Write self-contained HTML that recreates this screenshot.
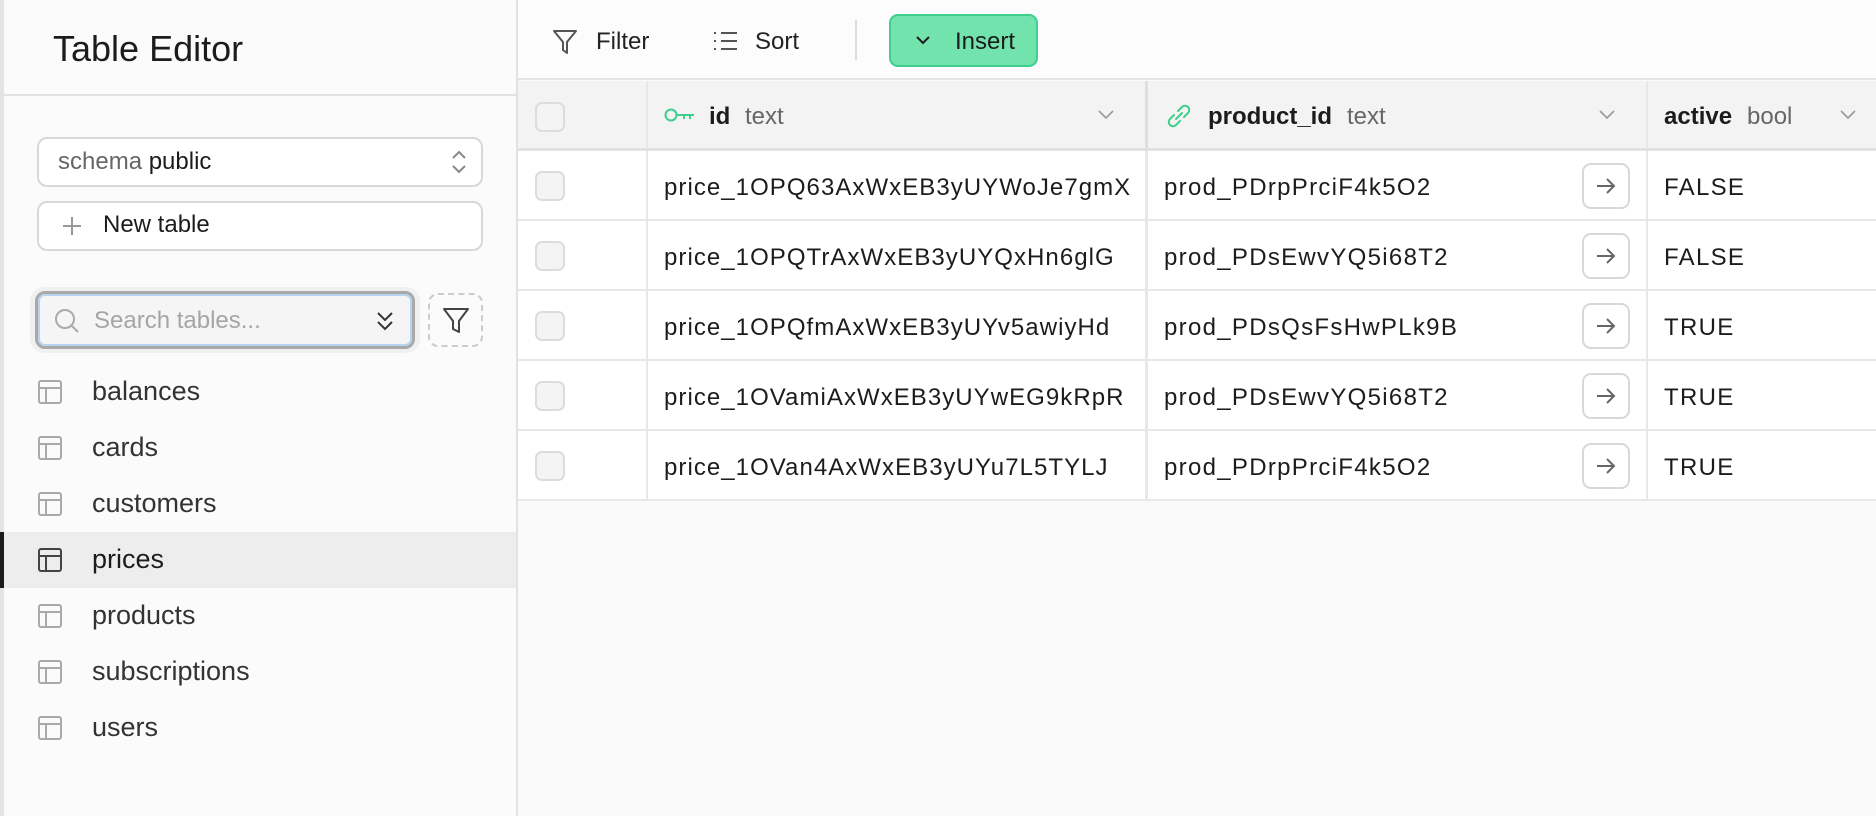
<!DOCTYPE html>
<html><head><meta charset="utf-8"><style>
*{box-sizing:border-box;margin:0;padding:0}
body{width:1876px;height:816px;overflow:hidden;font-family:"Liberation Sans",sans-serif;background:#fafafa;position:relative;color:#1c1c1c}
.abs{position:absolute}
#side{left:0;top:0;width:518px;height:816px;background:#fbfbfb;border-left:4px solid #e4e4e4;border-right:2px solid #e2e2e2}
.title{left:49px;top:28px;font-size:36px;color:#1c1c1c}
.hline{left:0;top:94px;width:514px;height:2px;background:#e2e2e2}
.box{border:2px solid #d8d8d8;border-radius:10px;background:#fff}
.item{left:0;width:514px;height:56px;font-size:27px;color:#333}
.item span{position:absolute;left:92px;top:12px}
.item svg{position:absolute;left:38px;top:16px}
.tb{font-size:24px;color:#222}
.row{position:absolute;left:518px;width:1358px;height:70px;background:#fff;border-bottom:2px solid #e8e8e8}
.cb{position:absolute;left:17px;top:20px;width:30px;height:30px;border:2px solid #dcdcdc;border-radius:7px;background:#f4f4f4}
.cell{position:absolute;top:23px;font-size:24px;letter-spacing:1.3px;color:#1c1c1c}
.idc{letter-spacing:1.05px}
.vl{position:absolute;top:0;width:2px;height:100%;background:#e8e8e8}
.arr{position:absolute;left:1064px;top:12px;width:48px;height:46px;border:2px solid #d8d8d8;border-radius:9px;background:#fff}
</style></head><body>
<div id="side" class="abs">
 <div class="abs title">Table Editor</div>
 <div class="abs hline"></div>
</div>
<div class="abs box" style="left:37px;top:137px;width:446px;height:50px"></div>
<div class="abs" style="left:58px;top:148px;font-size:24px;color:#666">schema <span style="color:#1c1c1c">public</span></div>
<svg class="abs" style="left:450px;top:148px" width="18" height="28" viewBox="0 0 18 28"><path d="M3 10 L9 4 L15 10 M3 18 L9 24 L15 18" fill="none" stroke="#888" stroke-width="2"/></svg>
<div class="abs box" style="left:37px;top:201px;width:446px;height:50px"></div>
<svg class="abs" style="left:62px;top:216px" width="20" height="20"><path d="M10 1V19M1 10H19" stroke="#999" stroke-width="2"/></svg>
<div class="abs" style="left:103px;top:211px;font-size:24px;color:#1c1c1c">New table</div>
<div class="abs" style="left:30px;top:287px;width:390px;height:66px;border-radius:14px;background:#f0f0f0"></div>
<div class="abs" style="left:35px;top:291px;width:380px;height:58px;border:3px solid #a9a9a9;border-radius:10px;background:#f5f5f5;box-shadow:inset 0 0 0 2px #b7d4f0"></div>
<svg class="abs" style="left:54px;top:308px" width="26" height="26"><circle cx="11" cy="11" r="9" fill="none" stroke="#aaa" stroke-width="2"/><path d="M17.5 17.5L24 24" stroke="#aaa" stroke-width="2"/></svg>
<div class="abs" style="left:94px;top:307px;font-size:24px;color:#a5a5a5">Search tables...</div>
<svg class="abs" style="left:376px;top:309px" width="18" height="24"><path d="M2 4L9 11L16 4M2 13L9 20L16 13" fill="none" stroke="#333" stroke-width="2"/></svg>
<div class="abs" style="left:428px;top:293px;width:55px;height:54px;border:2px dashed #ccc;border-radius:10px"></div>
<svg class="abs" style="left:441px;top:305px" width="30" height="30"><path d="M3 4H27L18 16V27L12 24V16Z" fill="none" stroke="#444" stroke-width="2" stroke-linejoin="round"/></svg>
<div class="abs" style="left:0;top:532px;width:516px;height:56px;background:#ededed;border-left:4px solid #1c1c1c"></div>
<div class="abs item" style="top:364px"><svg width="24" height="24"><rect x="1" y="1" width="22" height="22" rx="2" fill="none" stroke="#aaa" stroke-width="2"/><path d="M1 8H23M8 8V23" stroke="#aaa" stroke-width="2"/></svg><span>balances</span></div>
<div class="abs item" style="top:420px"><svg width="24" height="24"><rect x="1" y="1" width="22" height="22" rx="2" fill="none" stroke="#aaa" stroke-width="2"/><path d="M1 8H23M8 8V23" stroke="#aaa" stroke-width="2"/></svg><span>cards</span></div>
<div class="abs item" style="top:476px"><svg width="24" height="24"><rect x="1" y="1" width="22" height="22" rx="2" fill="none" stroke="#aaa" stroke-width="2"/><path d="M1 8H23M8 8V23" stroke="#aaa" stroke-width="2"/></svg><span>customers</span></div>
<div class="abs item" style="top:532px"><svg width="24" height="24"><rect x="1" y="1" width="22" height="22" rx="2" fill="none" stroke="#444" stroke-width="2"/><path d="M1 8H23M8 8V23" stroke="#444" stroke-width="2"/></svg><span style="color:#1c1c1c">prices</span></div>
<div class="abs item" style="top:588px"><svg width="24" height="24"><rect x="1" y="1" width="22" height="22" rx="2" fill="none" stroke="#aaa" stroke-width="2"/><path d="M1 8H23M8 8V23" stroke="#aaa" stroke-width="2"/></svg><span>products</span></div>
<div class="abs item" style="top:644px"><svg width="24" height="24"><rect x="1" y="1" width="22" height="22" rx="2" fill="none" stroke="#aaa" stroke-width="2"/><path d="M1 8H23M8 8V23" stroke="#aaa" stroke-width="2"/></svg><span>subscriptions</span></div>
<div class="abs item" style="top:700px"><svg width="24" height="24"><rect x="1" y="1" width="22" height="22" rx="2" fill="none" stroke="#aaa" stroke-width="2"/><path d="M1 8H23M8 8V23" stroke="#aaa" stroke-width="2"/></svg><span>users</span></div>

<div class="abs" style="left:518px;top:0;width:1358px;height:80px;background:#fcfcfc;border-bottom:2px solid #e4e4e4"></div>
<svg class="abs" style="left:552px;top:28px" width="26" height="28"><path d="M2 3H24L15 14V25L11 22V14Z" fill="none" stroke="#555" stroke-width="2" stroke-linejoin="round"/></svg>
<div class="abs tb" style="left:596px;top:28px">Filter</div>
<svg class="abs" style="left:713px;top:30px" width="26" height="22"><path d="M1 3H3M1 11H3M1 19H3M8 3H24M8 11H24M8 19H24" stroke="#555" stroke-width="2"/></svg>
<div class="abs tb" style="left:755px;top:28px">Sort</div>
<div class="abs" style="left:855px;top:20px;width:2px;height:40px;background:#ddd"></div>
<div class="abs" style="left:889px;top:14px;width:149px;height:53px;background:#72e3ad;border:2px solid #3ecf8e;border-radius:9px"></div>
<svg class="abs" style="left:915px;top:35px" width="16" height="12"><path d="M2 2L8 8L14 2" fill="none" stroke="#1c1c1c" stroke-width="2"/></svg>
<div class="abs tb" style="left:955px;top:28px;color:#1c1c1c">Insert</div>

<div class="row" style="top:81px;background:#f3f3f3;height:70px;border-bottom:3px solid #e2e2e2">
 <div class="cb" style="top:21px"></div>
 <div class="vl" style="left:128px"></div><div class="vl" style="left:627px;width:3px;background:#dedede"></div><div class="vl" style="left:1128px"></div>
 <svg style="position:absolute;left:146px;top:25px" width="32" height="18"><circle cx="7" cy="9" r="5.5" fill="none" stroke="#3ecf8e" stroke-width="2"/><path d="M13 9H30M20 9V13M26 9V13" stroke="#3ecf8e" stroke-width="2"/></svg>
 <div class="cell" style="left:191px;top:22px;font-weight:bold;letter-spacing:0">id</div>
 <div class="cell" style="left:227px;top:22px;color:#666;letter-spacing:0">text</div>
 <svg style="position:absolute;left:580px;top:29px" width="16" height="10"><path d="M1 1L8 8L15 1" fill="none" stroke="#999" stroke-width="1.6"/></svg>
 <svg style="position:absolute;left:647px;top:21px" width="28" height="28"><path d="M11 17L17 11M9 13L5 17a4 4 0 0 0 6 6L15 19M13 9L17 5a4 4 0 0 1 6 6L19 15" fill="none" stroke="#3ecf8e" stroke-width="2" stroke-linecap="round"/></svg>
 <div class="cell" style="left:690px;top:22px;font-weight:bold;letter-spacing:0">product_id</div>
 <div class="cell" style="left:829px;top:22px;color:#666;letter-spacing:0">text</div>
 <svg style="position:absolute;left:1081px;top:29px" width="16" height="10"><path d="M1 1L8 8L15 1" fill="none" stroke="#999" stroke-width="1.6"/></svg>
 <div class="cell" style="left:1146px;top:22px;font-weight:bold;letter-spacing:0">active</div>
 <div class="cell" style="left:1229px;top:22px;color:#666;letter-spacing:0">bool</div>
 <svg style="position:absolute;left:1322px;top:29px" width="16" height="10"><path d="M1 1L8 8L15 1" fill="none" stroke="#999" stroke-width="1.6"/></svg>
</div>

<div class="row" style="top:151px"><div class="cb"></div><div class="vl" style="left:128px"></div><div class="vl" style="left:627px;width:3px"></div><div class="vl" style="left:1128px"></div>
<div class="cell idc" style="left:146px">price_1OPQ63AxWxEB3yUYWoJe7gmX</div><div class="cell" style="left:646px">prod_PDrpPrciF4k5O2</div><div class="arr"><svg width="44" height="42"><path d="M13 21H30M23 14L30 21L23 28" fill="none" stroke="#666" stroke-width="2"/></svg></div><div class="cell" style="left:1146px">FALSE</div></div>
<div class="row" style="top:221px"><div class="cb"></div><div class="vl" style="left:128px"></div><div class="vl" style="left:627px;width:3px"></div><div class="vl" style="left:1128px"></div>
<div class="cell idc" style="left:146px">price_1OPQTrAxWxEB3yUYQxHn6glG</div><div class="cell" style="left:646px">prod_PDsEwvYQ5i68T2</div><div class="arr"><svg width="44" height="42"><path d="M13 21H30M23 14L30 21L23 28" fill="none" stroke="#666" stroke-width="2"/></svg></div><div class="cell" style="left:1146px">FALSE</div></div>
<div class="row" style="top:291px"><div class="cb"></div><div class="vl" style="left:128px"></div><div class="vl" style="left:627px;width:3px"></div><div class="vl" style="left:1128px"></div>
<div class="cell idc" style="left:146px">price_1OPQfmAxWxEB3yUYv5awiyHd</div><div class="cell" style="left:646px">prod_PDsQsFsHwPLk9B</div><div class="arr"><svg width="44" height="42"><path d="M13 21H30M23 14L30 21L23 28" fill="none" stroke="#666" stroke-width="2"/></svg></div><div class="cell" style="left:1146px">TRUE</div></div>
<div class="row" style="top:361px"><div class="cb"></div><div class="vl" style="left:128px"></div><div class="vl" style="left:627px;width:3px"></div><div class="vl" style="left:1128px"></div>
<div class="cell idc" style="left:146px">price_1OVamiAxWxEB3yUYwEG9kRpR</div><div class="cell" style="left:646px">prod_PDsEwvYQ5i68T2</div><div class="arr"><svg width="44" height="42"><path d="M13 21H30M23 14L30 21L23 28" fill="none" stroke="#666" stroke-width="2"/></svg></div><div class="cell" style="left:1146px">TRUE</div></div>
<div class="row" style="top:431px"><div class="cb"></div><div class="vl" style="left:128px"></div><div class="vl" style="left:627px;width:3px"></div><div class="vl" style="left:1128px"></div>
<div class="cell idc" style="left:146px">price_1OVan4AxWxEB3yUYu7L5TYLJ</div><div class="cell" style="left:646px">prod_PDrpPrciF4k5O2</div><div class="arr"><svg width="44" height="42"><path d="M13 21H30M23 14L30 21L23 28" fill="none" stroke="#666" stroke-width="2"/></svg></div><div class="cell" style="left:1146px">TRUE</div></div>
</body></html>
